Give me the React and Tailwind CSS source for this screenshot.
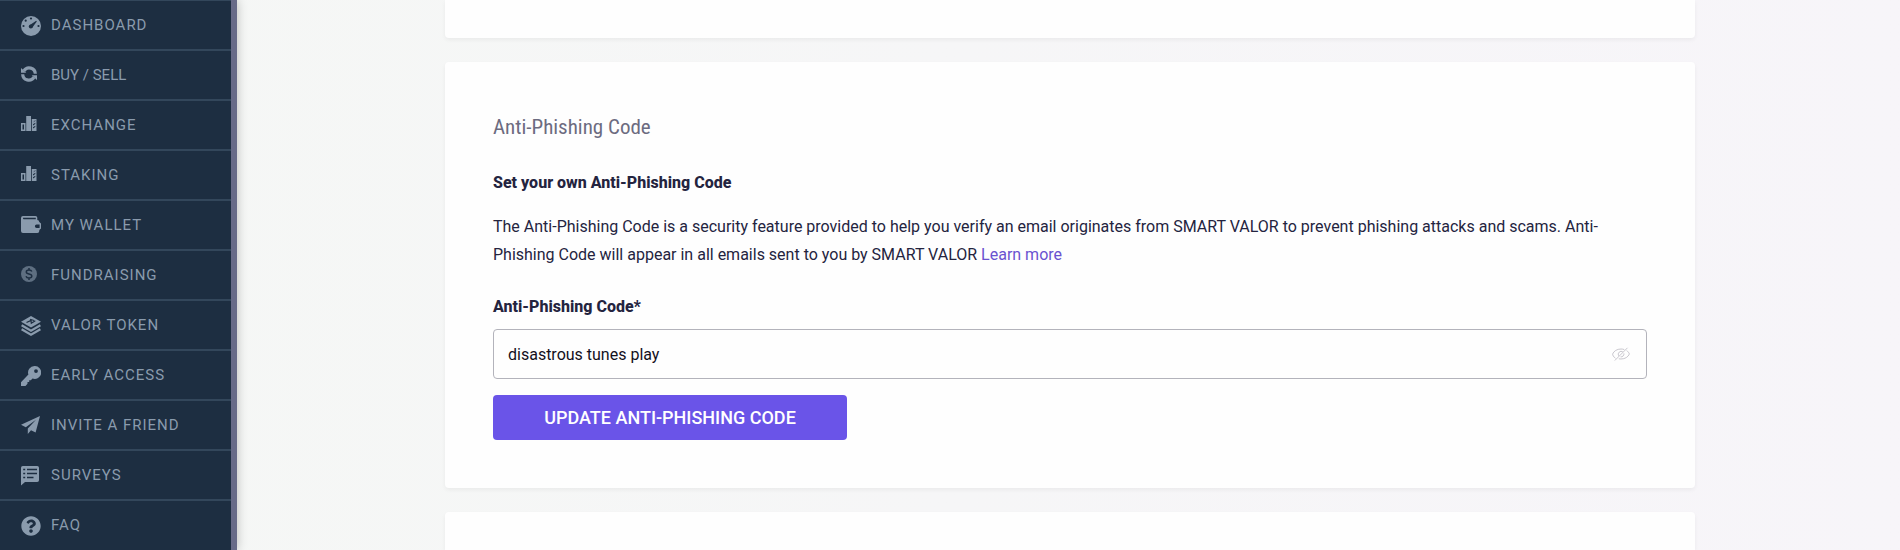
import { useState } from 'react'
import { FaQuestionCircle } from 'react-icons/fa'

const NAV_ITEMS = [
  { label: 'Dashboard', icon: GaugeIcon, size: 'size-5' },
  { label: 'Buy / Sell', icon: RefreshIcon, size: 'size-4', tight: true },
  { label: 'Exchange', icon: BarsIcon, size: 'size-4' },
  { label: 'Staking', icon: BarsIcon, size: 'size-4' },
  { label: 'My wallet', icon: WalletIcon, size: 'size-5' },
  { label: 'Fundraising', icon: DollarIcon, size: 'size-4', faded: true },
  { label: 'Valor token', icon: LayersIcon, size: 'size-5' },
  { label: 'Early access', icon: KeyIcon, size: 'size-5' },
  { label: 'Invite a friend', icon: PlaneIcon, size: 'size-5' },
  { label: 'Surveys', icon: SurveyIcon, size: 'size-5' },
  { label: 'FAQ', icon: FaQuestionCircle, size: 'size-5' },
]

export default function App() {
  return (
    <div className="flex h-screen overflow-hidden bg-linear-to-r from-[#f5f7f5] to-[#f7f5f9] font-[Roboto,sans-serif] text-[#24243f]">
      <Sidebar />

      <main className="flex min-w-0 flex-1 flex-col items-center gap-6 pl-[3px]">
        <Card className="h-[38px] rounded-t-none" />
        <Card className="p-12">
          <AntiPhishingForm />
        </Card>
        <Card className="flex-1 rounded-b-none" />
      </main>
    </div>
  )
}

function Sidebar() {
  return (
    <nav className="w-[237px] shrink-0 border-r-6 border-[#686b88] bg-[#1d2e41] shadow-[0_0_10px_rgba(0,0,0,0.25)]">
      <ul className="-mt-px">
        {NAV_ITEMS.map(item => (
          <NavItem key={item.label} {...item} />
        ))}
      </ul>
    </nav>
  )
}

function NavItem({ label, icon: Icon, size, tight, faded }) {
  return (
    <li className="border-t-2 border-[#33475b]">
      <a href="#" className="flex h-12 items-start pt-[15px] pl-[21px] text-[#8a9bad]">
        <span className={`flex w-[30px] ${faded ? 'opacity-60' : ''}`}>
          <Icon className={size} />
        </span>
        <span className={`text-[15px] leading-[18px] uppercase ${tight ? 'tracking-normal' : 'tracking-[1px]'}`}>
          {label}
        </span>
      </a>
    </li>
  )
}

function Card({ className, children }) {
  return (
    <section className={`w-full max-w-[1250px] shrink-0 rounded bg-[#fefefe] shadow-[0_2px_4px_rgba(0,0,0,0.05)] ${className}`}>
      {children}
    </section>
  )
}

function AntiPhishingForm() {
  const [code, setCode] = useState('disastrous tunes play')

  return (
    <form onSubmit={e => e.preventDefault()}>
      <h2 className="font-['Roboto_Condensed','Liberation_Sans_Narrow',Roboto,sans-serif] text-[21px] leading-[35px] text-[#6c6b80]">
        Anti-Phishing Code
      </h2>
      <h3 className="mt-6 text-base leading-7 font-extrabold">Set your own Anti-Phishing Code</h3>
      <p className="mt-4 text-base leading-7">
        The Anti-Phishing Code is a security feature provided to help you verify an email originates from SMART VALOR
        to prevent phishing attacks and scams. Anti-Phishing Code will appear in all emails sent to you by SMART VALOR{' '}
        <a href="#" className="text-[#6a52d0]">Learn more</a>
      </p>

      <label htmlFor="code" className="mt-6 block text-base leading-7 font-extrabold">Anti-Phishing Code*</label>
      <div className="mt-2 flex h-[50px] items-center rounded border border-[#b3b3bb] pr-4 pl-[14px]">
        <input
          id="code"
          value={code}
          onChange={e => setCode(e.target.value)}
          className="h-full min-w-0 flex-1 text-base text-[#14101c] outline-none"
        />
        <button type="button" aria-label="Hide code" className="text-[#c9c7ce]">
          <EyeOffIcon className="h-4 w-[18px]" />
        </button>
      </div>

      <button className="mt-4 h-[45px] w-[354px] rounded bg-[#6a54e8] text-lg font-medium text-white uppercase">
        Update Anti-Phishing Code
      </button>
    </form>
  )
}

function GaugeIcon({ className }) {
  return (
    <svg viewBox="0 0 20 20" className={className}>
      <circle cx="10" cy="10" r="10" fill="currentColor" />
      <g fill="#1d2e41">
        <circle cx="10" cy="2.5" r="1.1" />
        <circle cx="4.7" cy="4.7" r="1.1" />
        <circle cx="2.5" cy="10" r="1.1" />
        <circle cx="17.5" cy="10" r="1.1" />
        <circle cx="9.8" cy="10.5" r="2" />
        <path d="M8.600 9.200l6.600-4.400.6.600-4.600 6.400z" />
      </g>
    </svg>
  )
}

function RefreshIcon({ className }) {
  return (
    <svg viewBox="0 0 16 16" className={className} fill="none" stroke="currentColor" strokeWidth="3.2">
      <path d="M3 4.800A6.100 6.100 0 0 1 14.300 7.800M13 11.200A6.100 6.100 0 0 1 1.700 8.200" />
      <path d="M0 2v4.800h5.300zM16 14V9.200h-5.300z" fill="currentColor" stroke="none" />
    </svg>
  )
}

function BarsIcon({ className }) {
  return (
    <svg viewBox="0 0 16 16" className={className} fill="currentColor">
      <path d="M0 7h4.500v8H0zM1.500 8.500v5h1.500v-5z" fillRule="evenodd" />
      <path d="M5.200 0H10v15H5.200z" />
      <path d="M10.800 3h4.700v12h-4.700zM12 6.500l2.300-1.500v-1zM12 9.500l2.300-1.500V6.800L12 8.300zM12 12.500l2.300-1.500V9.800L12 11.300z" fillRule="evenodd" />
    </svg>
  )
}

function WalletIcon({ className }) {
  return (
    <svg viewBox="0 0 20 20" className={className}>
      <path d="M2 0h12.500a1.800 1.800 0 0 1 1.800 1.800V4a2.200 2.200 0 0 1 2 2l1.700 1.500v5L18.300 14v1a2 2 0 0 1-2 2H2a2 2 0 0 1-2-2V2a2 2 0 0 1 2-2z" fill="currentColor" />
      <path d="M2 1.800h12.800V3.200H2.600q-.8 0-.6-1.400zM18.600 8.500h-3a1.700 1.700 0 0 0 0 3.400h3z" fill="#1d2e41" />
    </svg>
  )
}

function DollarIcon({ className }) {
  return (
    <svg viewBox="0 0 16 16" className={className}>
      <circle cx="8" cy="8" r="8" fill="currentColor" />
      <path d="M10.800 5.600C10.400 4.500 9.400 4 8 4 6.500 4 5.300 4.700 5.300 5.900c0 2.700 5.500 1.300 5.500 4.100C10.800 11.300 9.600 12 8 12s-2.600-.6-3-1.700M8 2v2M8 12v2" fill="none" stroke="#1d2e41" strokeWidth="1.5" />
    </svg>
  )
}

function LayersIcon({ className }) {
  return (
    <svg viewBox="0 0 20 20" className={className} fill="none" stroke="currentColor" strokeWidth="2.2">
      <path d="M10 0l10 5.800-10 5.700L0 5.800z" fill="currentColor" stroke="none" />
      <path d="M.6 9.300L10 14.700l9.400-5.400M.6 13.300L10 18.700l9.400-5.400" />
      <path d="M5.500 6.500l4.500-2 .3 2.700 4-2.400M9 3.300l4 1.200" stroke="#1d2e41" strokeWidth="1.2" />
    </svg>
  )
}

function KeyIcon({ className }) {
  return (
    <svg viewBox="0 0 20 20" className={className} fill="currentColor">
      <path d="M13.500 0A6.500 6.500 0 1 1 11.500 12.600L9.800 14.300H8.200V16H6.500v1.700L4.500 20H0v-3.700l7.400-7.700A6.500 6.500 0 0 1 13.500 0zM15 3.200a1.900 1.900 0 1 0 0 3.800 1.900 1.900 0 0 0 0-3.800z" fillRule="evenodd" />
    </svg>
  )
}

function PlaneIcon({ className }) {
  return (
    <svg viewBox="0 0 20 20" className={className} fill="currentColor">
      <path d="M19 0L0 8.800l4.800 2.400L15 3.800 6.800 12.400V18l3.200-3.800 4.600 2.200z" />
    </svg>
  )
}

function SurveyIcon({ className }) {
  return (
    <svg viewBox="0 0 20 20" className={className}>
      <path d="M1.800 0h14.400A1.800 1.800 0 0 1 18 1.800v12.400a1.800 1.800 0 0 1-1.800 1.800H4l-4 3.500V1.800A1.800 1.800 0 0 1 1.800 0z" fill="currentColor" />
      <path d="M2.200 3.500h2M6 3.500h10M2.200 7.500h2M6 7.500h10M2.200 11.500h2M6 11.500h6.500" stroke="#1d2e41" strokeWidth="1.7" />
    </svg>
  )
}

function EyeOffIcon({ className }) {
  return (
    <svg viewBox="0 0 18 16" className={className} fill="none" stroke="currentColor">
      <path d="M3.500 12.300C1.500 11 .6 9 .6 8c1.300-3 4.400-5 8.400-5 1.200 0 2.300.2 3.300.6M14.600 4.500C16 5.500 17 6.800 17.400 8c-1.300 3-4.400 5-8.400 5-.8 0-1.500-.1-2.200-.2" />
      <path d="M6.600 9.800A3 3 0 0 1 10.800 5.800M11.900 7.400A3 3 0 0 1 8.600 10.900M2.800 14.500L15.500 1.800" />
    </svg>
  )
}
